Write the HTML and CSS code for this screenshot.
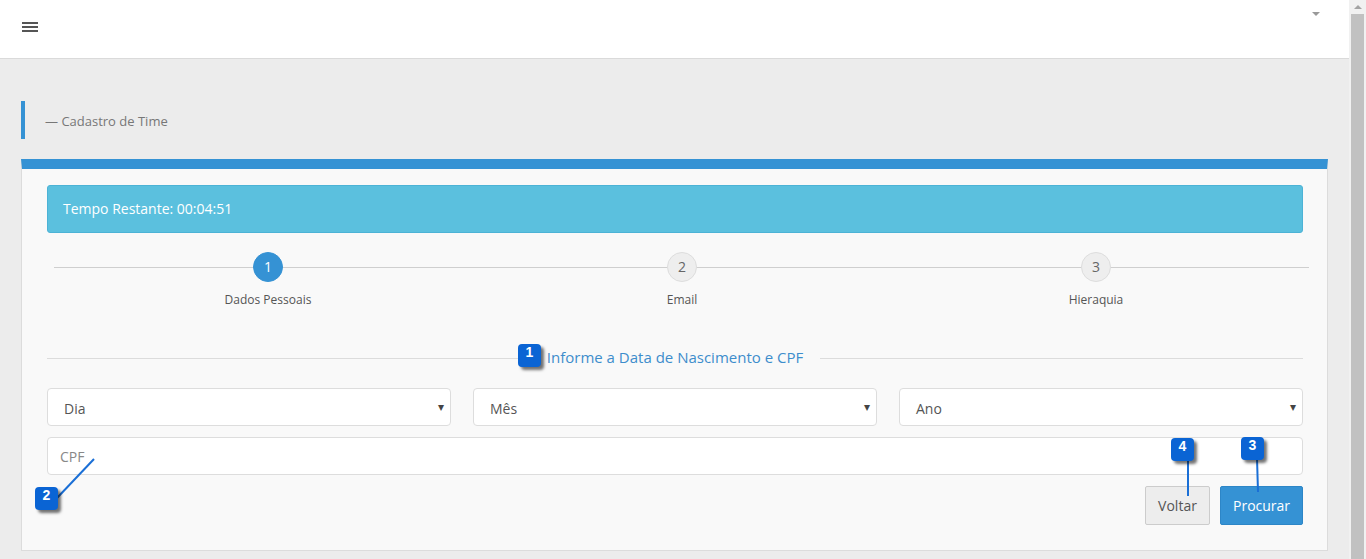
FILE: index.html
```html
<!DOCTYPE html>
<html lang="pt">
<head>
<meta charset="utf-8">
<title>Cadastro de Time</title>
<link rel="stylesheet" href="styles.css">
</head>
<body>
<div class="app">
  <div class="page">
    <header class="topbar">
      <div class="hamburger"><span></span><span></span><span></span></div>
      <div class="user-caret"></div>
    </header>
    <main class="main">
      <div class="page-title">— Cadastro de Time</div>
      <section class="card">
        <div class="alert">Tempo Restante: 00:04:51</div>
        <div class="steps">
          <div class="step active"><div class="circle">1</div><div class="label">Dados Pessoais</div></div>
          <div class="step"><div class="circle">2</div><div class="label">Email</div></div>
          <div class="step"><div class="circle">3</div><div class="label">Hieraquia</div></div>
        </div>
        <div class="legend"><span>Informe a Data de Nascimento e CPF</span></div>
        <div class="selects">
          <div class="select"><span>Dia</span><i>▾</i></div>
          <div class="select"><span>Mês</span><i>▾</i></div>
          <div class="select"><span>Ano</span><i>▾</i></div>
        </div>
        <div class="input">CPF</div>
        <div class="actions">
          <button class="btn btn-default">Voltar</button>
          <button class="btn btn-primary">Procurar</button>
        </div>
      </section>
    </main>
    <svg class="callout-lines" width="1349" height="559" viewBox="0 0 1349 559">
      <line x1="57" y1="498" x2="94" y2="459" />
      <line x1="1188" y1="458" x2="1188" y2="496" />
      <line x1="1257" y1="458" x2="1258" y2="492" />
    </svg>
    <div class="badge b1">1</div>
    <div class="badge b2">2</div>
    <div class="badge b3">3</div>
    <div class="badge b4">4</div>
  </div>
  <div class="scrollbar"><div class="arrow"></div><div class="thumb"></div></div>
</div>
</body>
</html>
```
FILE: styles.css
```css
* { box-sizing: border-box; }
html, body { margin: 0; padding: 0; height: 100%; overflow: hidden; }
body {
  font-family: "Open Sans", "Liberation Sans", sans-serif;
  background: #ececec;
  color: #555;
}
.app { display: flex; height: 559px; }
.page { flex: 1; position: relative; min-width: 0; }
.scrollbar { width: 17px; background: #f1f1f1; display: flex; flex-direction: column; align-items: center; }
.scrollbar .arrow {
  margin-top: 5px; width: 0; height: 0;
  border-left: 4px solid transparent; border-right: 4px solid transparent;
  border-bottom: 4px solid #a3a3a3;
}
.scrollbar .thumb { margin-top: 5px; width: 13px; flex: 1; background: #c1c1c1; }

.topbar {
  height: 59px; background: #fff; border-bottom: 1px solid #dadada;
  display: flex; align-items: flex-start; justify-content: space-between;
  padding: 0 29px 0 22px; position: relative;
}
.hamburger { display: flex; flex-direction: column; gap: 2px; width: 16px; margin-top: 22px; }
.hamburger span { height: 2px; background: #555; }
.user-caret {
  margin-top: 12px; width: 0; height: 0;
  border-left: 4px solid transparent; border-right: 4px solid transparent;
  border-top: 4px solid #999;
}

.main { padding: 42px 21px 0 21px; }
.page-title {
  border-left: 4px solid #3592d4;
  height: 38px; line-height: 40px;
  padding-left: 20px; font-size: 13px; color: #777;
}
.card {
  margin-top: 20px;
  background: #f9f9f9;
  border: 1px solid #dcdcdc;
  border-top: 10px solid #3592d4;
  padding: 16px 24px 25px 25px;
}
.alert {
  background: #5bc0de; border: 1px solid #4cb3d6; border-radius: 3px;
  color: #fff; font-size: 14px; line-height: 18px; padding: 14px 15px;
}
.steps {
  position: relative; display: grid; grid-template-columns: repeat(3, 414px);
  padding-left: 14px; margin-top: 19px;
}
.steps::before {
  content: ""; position: absolute; left: 7px; right: -6px; top: 15px;
  height: 1px; background: #cfcfcf;
}
.step { display: flex; flex-direction: column; align-items: center; position: relative; }
.circle {
  width: 30px; height: 30px; border-radius: 50%;
  background: #eee; border: 1px solid #ddd; color: #666;
  font-size: 14px; line-height: 28px; text-align: center;
}
.step.active .circle { background: #3592d4; border-color: #3592d4; color: #fff; }
.label { margin-top: 10px; font-size: 12px; color: #555; line-height: 16px; }

.legend {
  display: flex; align-items: center; margin-top: 38px; height: 22px;
  color: #3d8dcc; font-size: 15px;
}
.legend::before, .legend::after { content: ""; flex: 1; height: 1px; background: #dcdcdc; margin-top: 2px; }
.legend span { padding: 0 17px; }

.selects { display: grid; grid-template-columns: repeat(3, 1fr); gap: 22px; margin-top: 20px; }
.select, .input {
  height: 38px; background: #fff; border: 1px solid #ddd; border-radius: 4px;
  font-size: 14px; display: flex; align-items: center;
}
.select { justify-content: space-between; padding: 2px 6px 0 16px; color: #555; }
.select i { font-style: normal; font-size: 12px; color: #444; margin-top: -4px; }
.input { margin-top: 11px; padding: 0 12px; color: #888; }

.actions { display: flex; justify-content: flex-end; gap: 10px; margin-top: 11px; }
.btn {
  font-family: inherit; font-size: 14px; height: 39px; border-radius: 2px;
  padding: 0 12px; cursor: pointer;
}
.btn-default { background: #ededed; border: 1px solid #ccc; color: #555; width: 65px; }
.btn-primary { background: #3592d4; border: 1px solid #2d86c7; color: #fff; width: 83px; }

.callout-lines { position: absolute; left: 0; top: 0; pointer-events: none; }
.callout-lines line { stroke: #1a6fd6; stroke-width: 2; }
.badge {
  position: absolute; width: 23px; height: 23px; border-radius: 4px;
  background: #0a64d4; color: #fff; font-family: "Liberation Sans", Arial, sans-serif;
  font-weight: bold; font-size: 14px; line-height: 17px; text-align: center;
  box-shadow: 3px 3px 3px rgba(0,0,0,0.55);
}
.b1 { left: 518px; top: 344px; }
.b2 { left: 35px; top: 487px; }
.b3 { left: 1241px; top: 437px; }
.b4 { left: 1171px; top: 438px; }
```
